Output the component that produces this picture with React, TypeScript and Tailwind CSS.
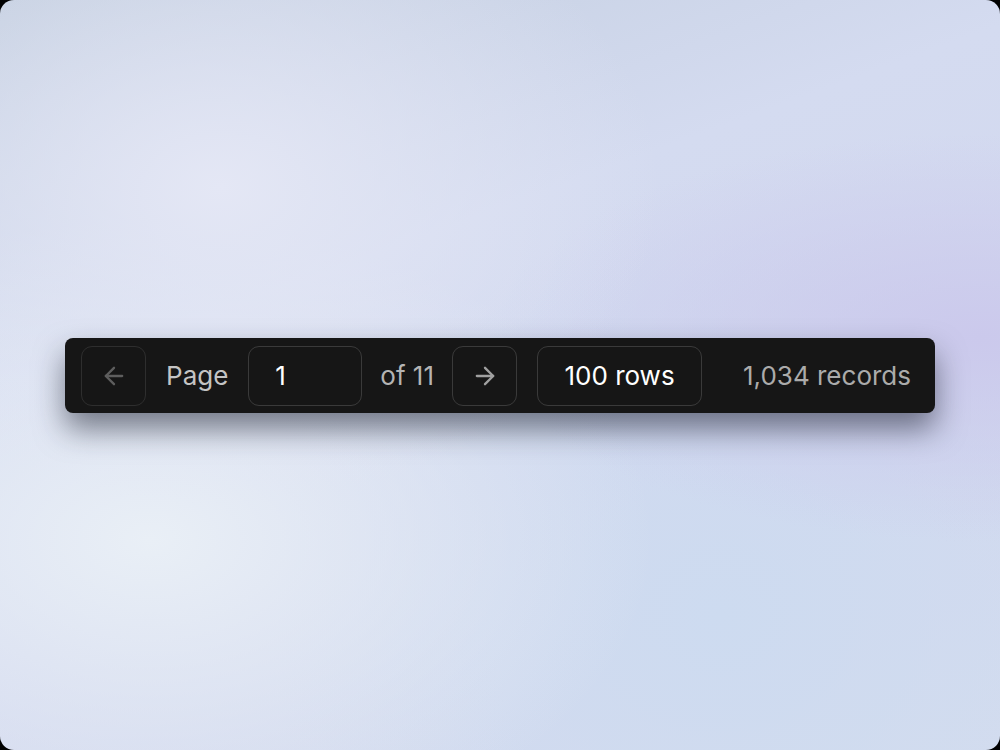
import React, { useState } from 'react';

const ArrowLeft: React.FC<{ className?: string }> = ({ className }) => (
  <svg viewBox="0 0 24 24" fill="none" stroke="currentColor" strokeWidth={2} strokeLinecap="round" strokeLinejoin="round" className={className}>
    <path d="M19 12H5" />
    <path d="M12 19l-7-7 7-7" />
  </svg>
);

const ArrowRight: React.FC<{ className?: string }> = ({ className }) => (
  <svg viewBox="0 0 24 24" fill="none" stroke="currentColor" strokeWidth={2} strokeLinecap="round" strokeLinejoin="round" className={className}>
    <path d="M5 12h14" />
    <path d="M12 5l7 7-7 7" />
  </svg>
);

const App: React.FC = () => {
  const [page, setPage] = useState('1');

  return (
    <div className="h-screen w-full bg-black">
      <div
        className="h-full w-full rounded-[14px] flex items-center justify-center font-['Inter',sans-serif]
          bg-[radial-gradient(ellipse_at_22%_25%,#e4e7f5_0%,transparent_40%),radial-gradient(ellipse_at_98%_45%,#cbc9ec_0%,transparent_35%),radial-gradient(ellipse_at_15%_72%,#e9eff6_0%,transparent_42%),radial-gradient(ellipse_at_72%_82%,#cddbf0_0%,transparent_45%),linear-gradient(160deg,#c3cedf_0%,#d4dbf0_35%,#d2d8ef_60%,#d4dcee_100%)]"
      >
        <div className="flex items-center pl-4 pr-6 pt-2 pb-[7px] bg-[#161616] rounded-lg shadow-[0_16px_30px_rgba(28,32,48,0.55)]">
          <button
            type="button"
            disabled
            aria-label="Previous page"
            className="w-[65px] h-[60px] flex items-center justify-center rounded-[11px] border border-[#2e2e2e] text-[#5e5e5e]"
          >
            <ArrowLeft className="w-[28px] h-[28px]" />
          </button>
          <span className="ml-5 text-[26px] text-[#c4c4c4]">Page</span>
          <input
            value={page}
            onChange={(e) => setPage(e.target.value)}
            className="ml-5 w-[114px] h-[60px] rounded-[11px] border border-[#3a3a3a] bg-transparent px-[26px] text-[26px] text-white focus:outline-none"
          />
          <span className="ml-[18px] text-[26px] text-[#b4b4b4]">of 11</span>
          <button
            type="button"
            aria-label="Next page"
            className="ml-[18px] w-[65px] h-[60px] flex items-center justify-center rounded-[11px] border border-[#3a3a3a] text-[#a0a0a0]"
          >
            <ArrowRight className="w-[28px] h-[28px]" />
          </button>
          <button
            type="button"
            className="ml-5 w-[165px] h-[60px] rounded-[11px] border border-[#3a3a3a] text-[26px] text-white"
          >
            100 rows
          </button>
          <span className="ml-[41px] text-[26px] text-[#ababab]">1,034 records</span>
        </div>
      </div>
    </div>
  );
};

export default App;
